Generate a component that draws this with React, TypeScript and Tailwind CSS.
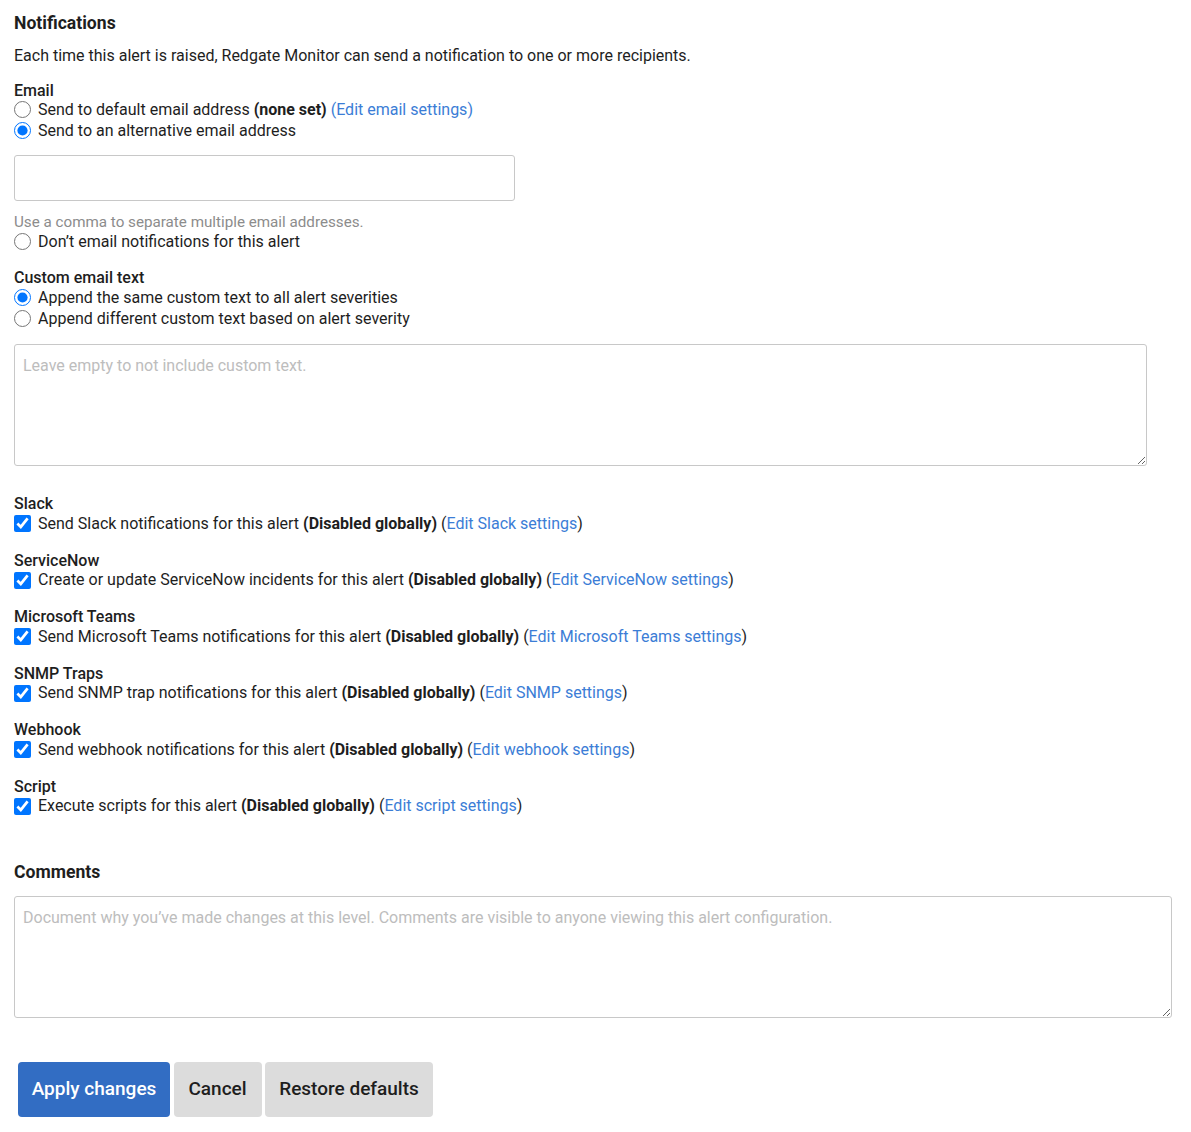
import React from 'react';

const font = { fontFamily: 'Roboto, "Liberation Sans", sans-serif' };

interface ChannelProps {
  title: string;
  text: string;
  link: string;
}

const Channel: React.FC<ChannelProps> = ({ title, text, link }) => (
  <div className="mt-[17.5px]">
    <div className="font-medium leading-[18px]">{title}</div>
    <label className="flex h-[21px] items-center">
      <input type="checkbox" defaultChecked className="m-0 mr-[7px] h-[17px] w-[17px]" />
      <span>
        {text} <b className="font-bold">(Disabled globally)</b> (
        <a className="text-[#3b7dd6]">{link}</a>)
      </span>
    </label>
  </div>
);

const Radio: React.FC<{ name: string; checked?: boolean; children: React.ReactNode }> = ({
  name,
  checked,
  children,
}) => (
  <label className="flex h-[21px] items-center">
    <input type="radio" name={name} defaultChecked={checked} className="m-0 mr-[7px] h-[17px] w-[17px]" />
    <span>{children}</span>
  </label>
);

const App: React.FC = () => {
  const channels: ChannelProps[] = [
    { title: 'ServiceNow', text: 'Create or update ServiceNow incidents for this alert', link: 'Edit ServiceNow settings' },
    { title: 'Microsoft Teams', text: 'Send Microsoft Teams notifications for this alert', link: 'Edit Microsoft Teams settings' },
    { title: 'SNMP Traps', text: 'Send SNMP trap notifications for this alert', link: 'Edit SNMP settings' },
    { title: 'Webhook', text: 'Send webhook notifications for this alert', link: 'Edit webhook settings' },
    { title: 'Script', text: 'Execute scripts for this alert', link: 'Edit script settings' },
  ];

  return (
    <div className="min-h-[1132px] bg-white px-[14px] pt-[12px] text-[16px] text-[#1e1e1e]" style={font}>
      {/* Notifications */}
      <h2 className="text-[17.6px] font-bold leading-[22px]">Notifications</h2>
      <p className="mt-[11px] leading-[22px]">
        Each time this alert is raised, Redgate Monitor can send a notification to one or more recipients.
      </p>

      {/* Email */}
      <div className="mt-[15px] font-medium leading-[17px]">Email</div>
      <Radio name="email">
        Send to default email address <b className="font-bold">(none set)</b>{' '}
        <a className="text-[#3b7dd6]">(Edit email settings)</a>
      </Radio>
      <Radio name="email" checked>
        Send to an alternative email address
      </Radio>
      <input
        type="text"
        className="mt-[14px] block h-[46px] w-[501px] rounded-[3px] border border-[#c8c8c8] px-2 outline-none"
      />
      <div className="mt-3 text-[15.2px] leading-[18px] text-[#8c8c8c]">
        Use a comma to separate multiple email addresses.
      </div>
      <Radio name="email">Don’t email notifications for this alert</Radio>

      {/* Custom email text */}
      <div className="mt-[17px] font-medium leading-[18px]">Custom email text</div>
      <Radio name="custom" checked>
        Append the same custom text to all alert severities
      </Radio>
      <Radio name="custom">Append different custom text based on alert severity</Radio>
      <textarea
        placeholder="Leave empty to not include custom text."
        className="mt-[15px] block h-[122px] w-[1133px] rounded-[3px] border border-[#c8c8c8] px-2 pt-[11px] leading-[20px] outline-none placeholder:text-[#bdbdbd]"
      />

      {/* Channels */}
      <div className="mt-[29px] font-medium leading-[18px]">Slack</div>
      <label className="flex h-[21px] items-center">
        <input type="checkbox" defaultChecked className="m-0 mr-[7px] h-[17px] w-[17px]" />
        <span>
          Send Slack notifications for this alert <b className="font-bold">(Disabled globally)</b> (
          <a className="text-[#3b7dd6]">Edit Slack settings</a>)
        </span>
      </label>
      {channels.map((c) => (
        <Channel key={c.title} {...c} />
      ))}

      {/* Comments */}
      <h3 className="mt-[44px] text-[17.6px] font-bold leading-[22px]">Comments</h3>
      <textarea
        placeholder="Document why you’ve made changes at this level. Comments are visible to anyone viewing this alert configuration."
        className="mt-[13px] block h-[122px] w-[1158px] rounded-[3px] border border-[#c8c8c8] px-2 pt-[11px] leading-[20px] outline-none placeholder:text-[#bdbdbd]"
      />

      {/* Actions */}
      <div className="mt-[44px] flex gap-[3.5px] pl-1">
        <button className="h-[55px] w-[152px] rounded-[4px] bg-[#326dc3] text-[19px] font-medium text-white">
          Apply changes
        </button>
        <button className="h-[55px] w-[88px] rounded-[4px] bg-[#dcdcdc] text-[19px] font-medium text-[#1e1e1e]">
          Cancel
        </button>
        <button className="h-[55px] w-[168px] rounded-[4px] bg-[#dcdcdc] text-[19px] font-medium text-[#1e1e1e]">
          Restore defaults
        </button>
      </div>
    </div>
  );
};

export default App;
